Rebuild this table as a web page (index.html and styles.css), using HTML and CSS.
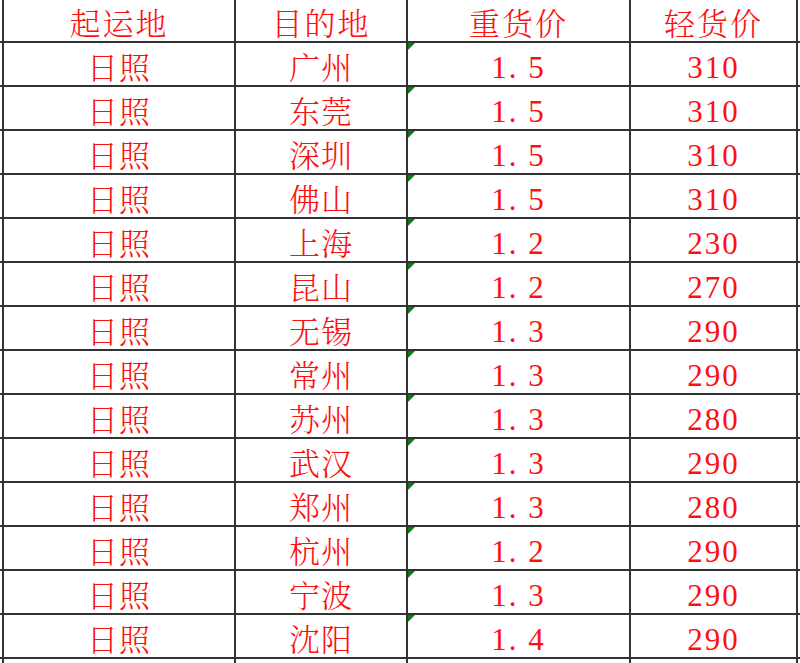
FILE: index.html
```html
<!DOCTYPE html>
<html lang="zh-CN">
<head>
<meta charset="utf-8">
<title>运价表</title>
<link rel="stylesheet" href="styles.css">
</head>
<body>
<table class="sheet">
  <colgroup>
    <col class="c-edge"><col class="c-from"><col class="c-to"><col class="c-heavy"><col class="c-light"><col class="c-edge">
  </colgroup>
  <thead>
    <tr class="head">
      <td class="edge"></td><th>起运地</th><th>目的地</th><th>重货价</th><th>轻货价</th><td class="edge end"></td>
    </tr>
  </thead>
  <tbody>
    <tr><td class="edge"></td><td class="cn">日照</td><td class="cn">广州</td><td class="num flag">1. 5</td><td class="num">310</td><td class="edge end"></td></tr>
    <tr><td class="edge"></td><td class="cn">日照</td><td class="cn">东莞</td><td class="num flag">1. 5</td><td class="num">310</td><td class="edge end"></td></tr>
    <tr><td class="edge"></td><td class="cn">日照</td><td class="cn">深圳</td><td class="num flag">1. 5</td><td class="num">310</td><td class="edge end"></td></tr>
    <tr><td class="edge"></td><td class="cn">日照</td><td class="cn">佛山</td><td class="num flag">1. 5</td><td class="num">310</td><td class="edge end"></td></tr>
    <tr><td class="edge"></td><td class="cn">日照</td><td class="cn">上海</td><td class="num flag">1. 2</td><td class="num">230</td><td class="edge end"></td></tr>
    <tr><td class="edge"></td><td class="cn">日照</td><td class="cn">昆山</td><td class="num flag">1. 2</td><td class="num">270</td><td class="edge end"></td></tr>
    <tr><td class="edge"></td><td class="cn">日照</td><td class="cn">无锡</td><td class="num flag">1. 3</td><td class="num">290</td><td class="edge end"></td></tr>
    <tr><td class="edge"></td><td class="cn">日照</td><td class="cn">常州</td><td class="num flag">1. 3</td><td class="num">290</td><td class="edge end"></td></tr>
    <tr><td class="edge"></td><td class="cn">日照</td><td class="cn">苏州</td><td class="num flag">1. 3</td><td class="num">280</td><td class="edge end"></td></tr>
    <tr><td class="edge"></td><td class="cn">日照</td><td class="cn">武汉</td><td class="num flag">1. 3</td><td class="num">290</td><td class="edge end"></td></tr>
    <tr><td class="edge"></td><td class="cn">日照</td><td class="cn">郑州</td><td class="num flag">1. 3</td><td class="num">280</td><td class="edge end"></td></tr>
    <tr><td class="edge"></td><td class="cn">日照</td><td class="cn">杭州</td><td class="num flag">1. 2</td><td class="num">290</td><td class="edge end"></td></tr>
    <tr><td class="edge"></td><td class="cn">日照</td><td class="cn">宁波</td><td class="num flag">1. 3</td><td class="num">290</td><td class="edge end"></td></tr>
    <tr><td class="edge"></td><td class="cn">日照</td><td class="cn">沈阳</td><td class="num flag">1. 4</td><td class="num">290</td><td class="edge end"></td></tr>
    <tr class="tail"><td class="edge"></td><td></td><td></td><td></td><td></td><td class="edge end"></td></tr>
  </tbody>
</table>
</body>
</html>
```
FILE: styles.css
```css
html, body {
  margin: 0;
  padding: 0;
  background: #ffffff;
  overflow: hidden;
}

.sheet {
  border-collapse: collapse;
  table-layout: fixed;
  width: 800px;
}

.c-edge { width: 3px; }
.c-from { width: 232px; }
.c-to { width: 172px; }
.c-heavy { width: 223px; }
.c-light { width: 167px; }

.sheet th,
.sheet td {
  border: 2px solid #333333;
  padding: 6px 0 2px 0;
  line-height: 34px;
  height: 34px;
  text-align: center;
  vertical-align: middle;
  color: #ff1010;
  white-space: nowrap;
}

.sheet .head th,
.sheet .head td {
  border-top: none;
  padding: 5px 0 2px 0;
  height: 34px;
}

.sheet th {
  font-family: "Noto Serif CJK SC", "Noto Sans CJK SC", sans-serif;
  font-weight: 300;
  font-size: 31px;
  letter-spacing: 2px;
}

.sheet .edge {
  border-left: none;
}

.sheet .edge.end {
  border-right: none;
}

.sheet td.cn {
  font-family: "Noto Serif CJK SC", "Noto Sans CJK SC", sans-serif;
  font-weight: 300;
  font-size: 31px;
  letter-spacing: 1px;
}

.sheet td.num {
  font-family: "Liberation Serif", serif;
  font-size: 31px;
  letter-spacing: 2px;
  padding: 8px 0 0 0;
  height: 34px;
}

.sheet td.flag {
  position: relative;
}

.sheet td.flag::before {
  content: "";
  position: absolute;
  left: 0;
  top: 0;
  width: 0;
  height: 0;
  border-top: 7px solid #107a10;
  border-right: 7px solid transparent;
}

.sheet .tail td {
  border-bottom: none;
  height: 20px;
}
```
